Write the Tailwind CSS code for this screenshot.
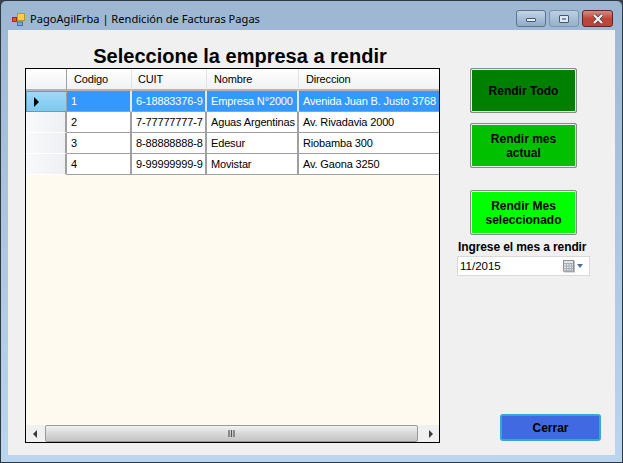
<!DOCTYPE html>
<html lang="es">
<head>
  <meta charset="UTF-8" />
  <title>PagoAgilFrba | Rendición de Facturas Pagas</title>
  <script src="https://cdn.jsdelivr.net/npm/@tailwindcss/browser@4"></script>
</head>
<body class="w-[623px] h-[463px] overflow-hidden bg-[#39424a] font-['Liberation_Sans',sans-serif] text-[12px] text-black">
  <!-- Ventana -->
  <div class="w-[623px] h-[463px] flex flex-col border border-[#2c3a44] rounded-t-[6px] bg-gradient-to-b from-[#9db6d2] via-[#aec6e0] to-[#bcd5ee]">

    <!-- Barra de titulo -->
    <div class="h-[29px] shrink-0 flex items-start pl-[11px] pr-[9px]">
      <svg class="mt-[10px] w-[16px] h-[16px]" viewBox="0 0 16 16">
        <rect x="0.500" y="6.500" width="4" height="4" fill="#e2552b" stroke="#9c2f14"/>
        <rect x="5.500" y="2.500" width="7" height="7" fill="#f8cc4e" stroke="#c2921f"/>
        <rect x="5.500" y="11" width="5" height="3.500" fill="#7ea4dc" stroke="#4a6ea8"/>
      </svg>
      <span class="ml-[2px] mt-[9px] font-['Noto_Sans',sans-serif] text-[11.100px] leading-[18px] text-black">PagoAgilFrba | Rendición de Facturas Pagas</span>
      <div class="ml-auto mt-[9px] flex gap-[3px]">
        <div class="w-[30px] h-[17px] rounded-[3px] border border-[#5f7388] bg-gradient-to-b from-[#c3d4e6] to-[#8fabc8] flex items-center justify-center">
          <div class="w-[10px] h-[4px] mt-[3px] bg-[#e8eef5] border border-[#44586c] rounded-[1px]"></div>
        </div>
        <div class="w-[30px] h-[17px] rounded-[3px] border border-[#7d93aa] bg-gradient-to-b from-[#bcd0e4] to-[#94b0cc] flex items-center justify-center">
          <div class="w-[10px] h-[8px] bg-[#dfe8f1] border border-[#44586c] rounded-[1px] flex items-center justify-center">
            <div class="w-[4px] h-[2px] bg-[#7d93aa]"></div>
          </div>
        </div>
        <div class="w-[31px] h-[17px] rounded-[3px] border border-[#5e2426] bg-gradient-to-b from-[#d98a80] via-[#c0453a] to-[#b9473c] flex items-center justify-center">
          <svg class="w-[12px] h-[10px]" viewBox="0 0 12 10">
            <path d="M2 1 L10 9 M10 1 L2 9" stroke="#3f3f3f" stroke-width="3.600"/>
            <path d="M2 1 L10 9 M10 1 L2 9" stroke="#f4f4f4" stroke-width="2.200"/>
          </svg>
        </div>
      </div>
    </div>

    <!-- Area de cliente -->
    <div class="mx-[7px] h-[425px] bg-[#f0f0f0] flex pl-[17px]">

      <!-- Columna izquierda -->
      <div class="w-[415px] flex flex-col shrink-0">
        <h1 class="h-[38px] pt-[15px] pl-[15px] text-center font-bold text-[20px] leading-[22px] whitespace-nowrap">Seleccione la empresa a rendir</h1>

        <div class="w-[415px] h-[375px] border border-black bg-[#fffaf0] flex flex-col">
          <div class="grid grid-cols-[41px_65px_75px_92px_140px] text-[11px] tracking-[-0.150px]">
            <!-- Encabezado -->
            <div class="h-[22px] bg-gradient-to-b from-white to-[#f1f2f4] border-r border-b-2 border-[#a0a0a0] border-b-[#b5b5b5]"></div>
            <div class="h-[22px] pl-[7px] leading-[21px] bg-gradient-to-b from-white to-[#f1f2f4] border-r border-b-2 border-[#e3e3e3] border-b-[#b5b5b5]">Codigo</div>
            <div class="h-[22px] pl-[6px] leading-[21px] bg-gradient-to-b from-white to-[#f1f2f4] border-r border-b-2 border-[#e3e3e3] border-b-[#b5b5b5]">CUIT</div>
            <div class="h-[22px] pl-[7px] leading-[21px] bg-gradient-to-b from-white to-[#f1f2f4] border-r border-b-2 border-[#e3e3e3] border-b-[#b5b5b5]">Nombre</div>
            <div class="h-[22px] pl-[7px] leading-[21px] bg-gradient-to-b from-white to-[#f1f2f4] border-b-2 border-[#e3e3e3] border-b-[#b5b5b5]">Direccion</div>

            <!-- Fila 1 -->
            <div class="h-[21px] bg-gradient-to-b from-[#9bdaf7] to-[#7fc8ee] border border-[#5a9fc4] border-r-[#a0a0a0] flex items-center pl-[6px]">
              <svg class="w-[7px] h-[10px]" viewBox="0 0 7 10"><path d="M1 0 L6 5 L1 10 Z" fill="#000"/></svg>
            </div>
            <div class="h-[21px] pl-[4px] leading-[20px] bg-[#3399ff] text-white border-r-2 border-b border-[#a0a0a0] border-r-[#dfeaf5]">1</div>
            <div class="h-[21px] pl-[4px] leading-[20px] bg-[#3399ff] text-white border-r-2 border-b border-[#a0a0a0] border-r-[#dfeaf5] whitespace-nowrap">6-18883376-9</div>
            <div class="h-[21px] pl-[4px] leading-[20px] bg-[#3399ff] text-white border-r-2 border-b border-[#a0a0a0] border-r-[#dfeaf5] whitespace-nowrap">Empresa N°2000</div>
            <div class="h-[21px] pl-[4px] leading-[20px] bg-[#3399ff] text-white border-b border-[#a0a0a0] whitespace-nowrap">Avenida Juan B. Justo 3768</div>

            <!-- Fila 2 -->
            <div class="h-[21px] bg-gradient-to-r from-[#f8f9fb] to-[#eef0f3] border-r-2 border-b border-[#a0a0a0] border-b-[#ffffff]"></div>
            <div class="h-[21px] pl-[4px] leading-[20px] bg-white border-r-2 border-b border-[#a0a0a0]">2</div>
            <div class="h-[21px] pl-[4px] leading-[20px] bg-white border-r-2 border-b border-[#a0a0a0] whitespace-nowrap">7-77777777-7</div>
            <div class="h-[21px] pl-[4px] leading-[20px] bg-white border-r-2 border-b border-[#a0a0a0] whitespace-nowrap">Aguas Argentinas</div>
            <div class="h-[21px] pl-[4px] leading-[20px] bg-white border-b border-[#a0a0a0] whitespace-nowrap">Av. Rivadavia 2000</div>

            <!-- Fila 3 -->
            <div class="h-[21px] bg-gradient-to-r from-[#f8f9fb] to-[#eef0f3] border-r-2 border-b border-[#a0a0a0] border-b-[#ffffff]"></div>
            <div class="h-[21px] pl-[4px] leading-[20px] bg-white border-r-2 border-b border-[#a0a0a0]">3</div>
            <div class="h-[21px] pl-[4px] leading-[20px] bg-white border-r-2 border-b border-[#a0a0a0] whitespace-nowrap">8-88888888-8</div>
            <div class="h-[21px] pl-[4px] leading-[20px] bg-white border-r-2 border-b border-[#a0a0a0] whitespace-nowrap">Edesur</div>
            <div class="h-[21px] pl-[4px] leading-[20px] bg-white border-b border-[#a0a0a0] whitespace-nowrap">Riobamba 300</div>

            <!-- Fila 4 -->
            <div class="h-[21px] bg-gradient-to-r from-[#f8f9fb] to-[#eef0f3] border-r-2 border-b border-[#a0a0a0] border-b-[#ffffff]"></div>
            <div class="h-[21px] pl-[4px] leading-[20px] bg-white border-r-2 border-b border-[#a0a0a0]">4</div>
            <div class="h-[21px] pl-[4px] leading-[20px] bg-white border-r-2 border-b border-[#a0a0a0] whitespace-nowrap">9-99999999-9</div>
            <div class="h-[21px] pl-[4px] leading-[20px] bg-white border-r-2 border-b border-[#a0a0a0] whitespace-nowrap">Movistar</div>
            <div class="h-[21px] pl-[4px] leading-[20px] bg-white border-b border-[#a0a0a0] whitespace-nowrap">Av. Gaona 3250</div>
          </div>

          <!-- Barra de desplazamiento -->
          <div class="mt-auto h-[17px] bg-[#f0f0f0] flex items-center">
            <div class="w-[19px] flex justify-center">
              <svg class="w-[5px] h-[8px]" viewBox="0 0 5 8"><path d="M4 0 L0 4 L4 8 Z" fill="#3a3a3a"/></svg>
            </div>
            <div class="w-[373px] h-[17px] rounded-[2px] border border-[#9a9a9a] bg-gradient-to-b from-[#f2f2f2] via-[#d8d8d8] to-[#c4c4c4] flex items-center justify-center">
              <svg class="w-[8px] h-[7px]" viewBox="0 0 8 7"><path d="M1 0V7M3.500 0V7M6 0V7" stroke="#555" stroke-width="1.200"/></svg>
            </div>
            <div class="ml-auto w-[18px] flex justify-center">
              <svg class="w-[5px] h-[8px]" viewBox="0 0 5 8"><path d="M1 0 L5 4 L1 8 Z" fill="#3a3a3a"/></svg>
            </div>
          </div>
        </div>
      </div>

      <!-- Columna derecha -->
      <div class="ml-[17px] w-[134px] flex flex-col pt-[38px] pb-[14px] font-bold text-[12px] leading-[14px]">
        <button class="ml-[13px] w-[107px] h-[45px] shrink-0 rounded-[2px] border border-[#8a8a8a] bg-[#008000] outline outline-1 -outline-offset-2 outline-[#eeeeee] font-bold">Rendir Todo</button>
        <button class="ml-[13px] mt-[10px] w-[107px] h-[45px] shrink-0 rounded-[2px] border border-[#8a8a8a] bg-[#00c000] outline outline-1 -outline-offset-2 outline-[#eeeeee] font-bold">Rendir mes<br>actual</button>
        <button class="ml-[13px] mt-[22px] w-[107px] h-[45px] shrink-0 rounded-[2px] border border-[#8a8a8a] bg-[#00ff00] outline outline-1 -outline-offset-2 outline-[#eeeeee] font-bold">Rendir Mes<br>seleccionado</button>
        <div class="ml-[1px] mt-[5px] whitespace-nowrap tracking-[-0.100px]">Ingrese el mes a rendir</div>
        <div class="mt-[2px] w-[133px] h-[20px] border border-[#d9d9d9] bg-white flex items-center pl-[2px] font-normal text-[11.500px]">
          <span>11/2015</span>
          <svg class="ml-auto w-[12px] h-[12px] drop-shadow-[1px_1px_0_#bbbbbb]" viewBox="0 0 12 12">
            <rect x="0.500" y="0.500" width="10" height="10.500" fill="#e2e5ea" stroke="#8b8f96"/>
            <path d="M1 3.500H10M1 6H10M1 8.500H10M3.500 3V11M6 3V11M8.500 3V11" stroke="#a9adb4" stroke-width="1"/>
          </svg>
          <svg class="ml-[2px] mr-[6px] w-[6px] h-[4px]" viewBox="0 0 6 4"><path d="M0 0 H6 L3 4 Z" fill="#4a6d94"/></svg>
        </div>
        <button class="ml-[43px] mt-auto w-[101px] h-[27px] shrink-0 rounded-[3px] border-2 border-[#39a4d6] bg-[#4169e1] font-bold">Cerrar</button>
      </div>
    </div>
  </div>
</body>
</html>
